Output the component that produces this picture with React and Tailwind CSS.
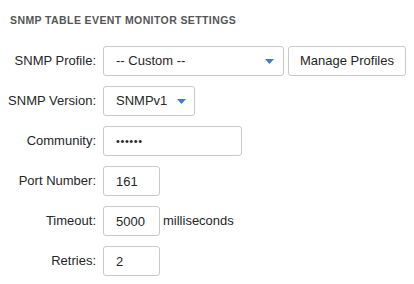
function Caret() {
  return (
    <svg className="h-[5px] w-[9px] shrink-0" viewBox="0 0 9 5">
      <path d="M0 0 H9 L4.5 5 Z" fill="#3d7ebf" />
    </svg>
  )
}

function Field({ label, children }) {
  return (
    <>
      <label className="flex h-[30px] items-center justify-end whitespace-nowrap text-[13px] text-[#262626]">
        {label}
      </label>
      <div className="flex h-[30px] items-center gap-[4px]">{children}</div>
    </>
  )
}

function TextBox({ value, width }) {
  return (
    <input
      className={`h-[30px] rounded-[3px] border border-[#c9c9c9] bg-white px-[12px] text-[#262626] outline-none ${width}`}
      readOnly
      value={value}
    />
  )
}

export default function App() {
  return (
    <div className="h-[284px] w-[414px] bg-white pl-[10px] font-['Liberation_Sans',Arial,sans-serif]">
      <h2 className="pt-[14px] text-[10.5px] font-bold uppercase leading-[12px] tracking-[0.4px] text-[#555]">
        SNMP Table Event Monitor Settings
      </h2>

      <div className="mt-[20px] grid grid-cols-[86px_auto] gap-x-[7px] gap-y-[10px]">
        <Field label="SNMP Profile:">
          <div className="flex h-[30px] w-[181px] items-center justify-between rounded-[3px] border border-[#c9c9c9] bg-white pl-[12px] pr-[9px] text-[13px] text-[#262626]">
            <span>-- Custom --</span>
            <Caret />
          </div>
          <button className="h-[30px] w-[118px] rounded-[3px] border border-[#c9c9c9] bg-white text-[13px] text-[#262626]">
            Manage Profiles
          </button>
        </Field>

        <Field label="SNMP Version:">
          <div className="flex h-[30px] w-[92px] items-center justify-between rounded-[3px] border border-[#c9c9c9] bg-white pl-[12px] pr-[8px] text-[13px] text-[#262626]">
            <span>SNMPv1</span>
            <Caret />
          </div>
        </Field>

        <Field label="Community:">
          <TextBox value="••••••" width="w-[139px] text-[11px] tracking-[0.6px]" />
        </Field>

        <Field label="Port Number:">
          <TextBox value="161" width="w-[57px] text-[13px]" />
        </Field>

        <Field label="Timeout:">
          <TextBox value="5000" width="w-[57px] text-[13px]" />
          <span className="ml-[-1px] text-[13px] text-[#262626]">milliseconds</span>
        </Field>

        <Field label="Retries:">
          <TextBox value="2" width="w-[57px] text-[13px]" />
        </Field>
      </div>
    </div>
  )
}
